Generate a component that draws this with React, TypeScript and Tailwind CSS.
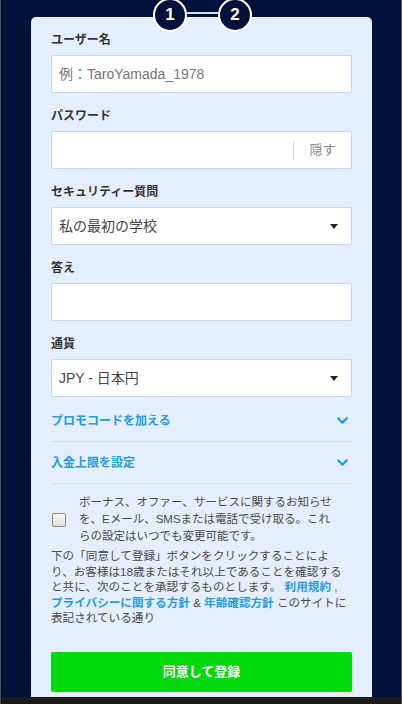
import { ChevronDown } from 'lucide-react';

const font = { fontFamily: '"Liberation Sans", "Noto Sans CJK JP", sans-serif' };

const Label = ({ children }: { children: React.ReactNode }) => (
    <div className="text-[12px] leading-[16px] font-bold text-[#333] mb-[7px]">{children}</div>
);

const Caret = () => (
    <svg width="8" height="5" viewBox="0 0 8 5" className="mr-[6px]">
        <path d="M0 0h8L4 5z" fill="#222" />
    </svg>
);

const TextInput = ({ placeholder }: { placeholder?: string }) => (
    <div className="h-[38px] bg-white border border-[#c3d5f6] rounded-[2px] flex items-center px-[7px] text-[14px] text-[#777]">
        {placeholder}
    </div>
);

const SelectBox = ({ value }: { value: string }) => (
    <div className="h-[38px] bg-white border border-[#c3d5f6] rounded-[2px] flex items-center justify-between px-[7px] text-[14px] text-[#444]">
        <span>{value}</span>
        <Caret />
    </div>
);

const Field = ({ label, children }: { label: string; children: React.ReactNode }) => (
    <div className="mb-[15px]">
        <Label>{label}</Label>
        {children}
    </div>
);

const Expander = ({ title }: { title: string }) => (
    <div className="flex items-center justify-between pt-[12px] pb-[12px] border-b border-[#d3def2]">
        <span className="text-[12px] leading-[16px] font-bold text-[#249ce0]">{title}</span>
        <ChevronDown className="w-[17px] h-[17px] text-[#249ce0] mr-[1px]" strokeWidth={3} />
    </div>
);

const Step = ({ n }: { n: number }) => (
    <div className="w-[34px] h-[34px] rounded-full bg-[#00123a] border-[2.5px] border-white flex items-center justify-center text-white text-[17px] font-bold">
        {n}
    </div>
);

const Link = ({ children }: { children: React.ReactNode }) => (
    <span className="font-bold text-[#249ce0]">{children}</span>
);

export default function App() {
    return (
        <div style={font} className="w-[402px] h-[704px] bg-[#00123a] border-x border-[#4b4f57] flex flex-col overflow-hidden relative">
            <div className="absolute top-[-2px] left-[152px] flex items-center">
                <Step n={1} />
                <div className="w-[31px] h-[2px] bg-[#d8dde6] -mt-[5px]" />
                <Step n={2} />
            </div>

            <div className="flex-1 mt-[17px] ml-[30px] mr-[29px] bg-[#e5eefd] rounded-t-[5px] px-[20px] pt-[15px] overflow-hidden">
                <Field label="ユーザー名">
                    <TextInput placeholder="例：TaroYamada_1978" />
                </Field>
                <Field label="パスワード">
                    <div className="h-[38px] bg-white border border-[#c3d5f6] rounded-[2px] flex items-center">
                        <div className="flex-1" />
                        <div className="w-px h-[20px] bg-[#d3dff3]" />
                        <span className="w-[57px] text-center text-[13px] text-[#888]">隠す</span>
                    </div>
                </Field>
                <Field label="セキュリティー質問">
                    <SelectBox value="私の最初の学校" />
                </Field>
                <Field label="答え">
                    <TextInput />
                </Field>
                <div>
                    <Label>通貨</Label>
                    <SelectBox value="JPY - 日本円" />
                </div>

                <div className="mt-[3px]">
                    <Expander title="プロモコードを加える" />
                    <Expander title="入金上限を設定" />
                </div>

                <div className="flex items-center mt-[10px]">
                    <div className="w-[14px] h-[14px] ml-[1px] mr-[13px] shrink-0 border border-[#8d8d8d] rounded-[2px] bg-gradient-to-b from-[#fbfbfb] to-[#dcdcdc]" />
                    <p className="text-[11.5px] leading-[17px] text-[#4a4a4a] whitespace-nowrap">
                        ボーナス、オファー、サービスに関するお知らせ<br />
                        を、Eメール、SMSまたは電話で受け取る。これ<br />
                        らの設定はいつでも変更可能です。
                    </p>
                </div>

                <p className="mt-[3px] text-[11.6px] leading-[15.6px] text-[#4a4a4a] whitespace-nowrap">
                    下の「同意して登録」ボタンをクリックすることによ<br />
                    り、お客様は18歳またはそれ以上であることを確認する<br />
                    と共に、次のことを承認するものとします。 <Link>利用規約</Link> ,<br />
                    <Link>プライバシーに関する方針</Link> &amp; <Link>年齢確認方針</Link> このサイトに<br />
                    表記されている通り
                </p>

                <button className="mt-[26px] w-full h-[40px] bg-[#00d909] rounded-[2px] text-white text-[13px] font-bold">
                    同意して登録
                </button>
            </div>

            <div className="h-[7px] bg-[#1b1b1b] shrink-0" />
        </div>
    );
}
